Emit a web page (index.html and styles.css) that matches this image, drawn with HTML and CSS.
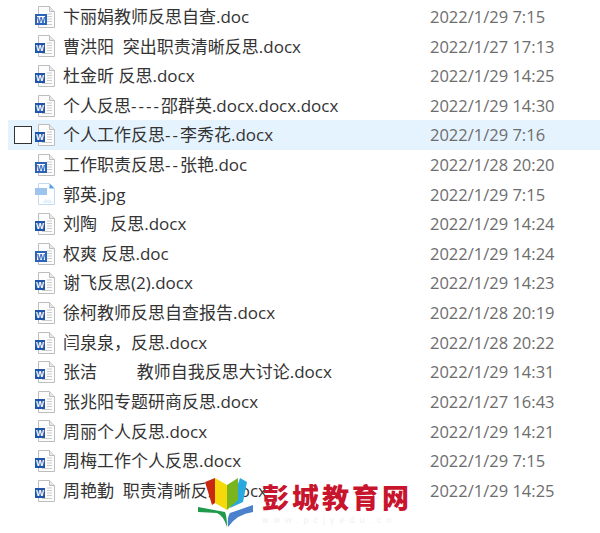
FILE: index.html
```html
<!DOCTYPE html>
<html lang="zh-CN">
<head>
  <meta charset="UTF-8" />
  <title>反思文件</title>
  <link rel="stylesheet" href="styles.css">
</head>
<body>
  <svg class="defs" width="0" height="0">
    <symbol id="page" viewBox="0 0 20 22">
      <path d="M3.5 .5H14.5L19.5 5.5V21.5H3.5Z" fill="#fdfdfd" stroke="#bdbdbd"/>
      <path d="M14.5 .5V5.5H19.5" fill="#e8e8e8" stroke="#bdbdbd"/>
      <path d="M12 8H17M12 10.5H17M12 13H17M12 15.5H17M7 18.5H17" stroke="#cbcbcb"/>
    </symbol>
    <symbol id="jpg" viewBox="0 0 20 22">
      <path d="M3.5 .5H14.5L19.5 5.5V21.5H3.5Z" fill="#fff" stroke="#c3daf2"/>
      <path d="M14.5 .5L19.5 5.5H14.5Z" fill="#5a9fe4"/>
      <rect x="0" y="5" width="12" height="7" fill="#9cc4ee"/>
      <path d="M7 20L11 16L13 17.5L15 16L18 20Z" fill="#e6f0fb"/>
    </symbol>
  </svg>

  <ul class="file-list">
    <li class="file"><span class="check"></span><svg class="icon" viewBox="0 0 20 22"><use href="#page"/><rect class="w-box-old" x="1" y="9" width="10" height="9"/><text x="6" y="16.5" class="icon-w blue">W</text></svg><span class="name">卞丽娟教师反思自查.doc</span><span class="date">2022/1/29 7:15</span></li>
    <li class="file"><span class="check"></span><svg class="icon" viewBox="0 0 20 22"><use href="#page"/><rect class="w-box" x="0" y="8" width="10" height="10"/><text x="5" y="16" class="icon-w">W</text></svg><span class="name">曹洪阳&nbsp;&nbsp;突出职责清晰反思.docx</span><span class="date">2022/1/27 17:13</span></li>
    <li class="file"><span class="check"></span><svg class="icon" viewBox="0 0 20 22"><use href="#page"/><rect class="w-box" x="0" y="8" width="10" height="10"/><text x="5" y="16" class="icon-w">W</text></svg><span class="name">杜金昕 反思.docx</span><span class="date">2022/1/29 14:25</span></li>
    <li class="file"><span class="check"></span><svg class="icon" viewBox="0 0 20 22"><use href="#page"/><rect class="w-box" x="0" y="8" width="10" height="10"/><text x="5" y="16" class="icon-w">W</text></svg><span class="name">个人反思<span class="dash">----</span>邵群英.docx.docx.docx</span><span class="date">2022/1/29 14:30</span></li>
    <li class="file selected"><span class="check on"></span><svg class="icon" viewBox="0 0 20 22"><use href="#page"/><rect class="w-box" x="0" y="8" width="10" height="10"/><text x="5" y="16" class="icon-w">W</text></svg><span class="name">个人工作反思<span class="dash">--</span>李秀花.docx</span><span class="date">2022/1/29 7:16</span></li>
    <li class="file"><span class="check"></span><svg class="icon" viewBox="0 0 20 22"><use href="#page"/><rect class="w-box-old" x="1" y="9" width="10" height="9"/><text x="6" y="16.5" class="icon-w blue">W</text></svg><span class="name">工作职责反思<span class="dash">--</span>张艳.doc</span><span class="date">2022/1/28 20:20</span></li>
    <li class="file"><span class="check"></span><svg class="icon" viewBox="0 0 20 22"><use href="#jpg"/></svg><span class="name">郭英.jpg</span><span class="date">2022/1/29 7:15</span></li>
    <li class="file"><span class="check"></span><svg class="icon" viewBox="0 0 20 22"><use href="#page"/><rect class="w-box" x="0" y="8" width="10" height="10"/><text x="5" y="16" class="icon-w">W</text></svg><span class="name">刘陶&nbsp;&nbsp;&nbsp;反思.docx</span><span class="date">2022/1/29 14:24</span></li>
    <li class="file"><span class="check"></span><svg class="icon" viewBox="0 0 20 22"><use href="#page"/><rect class="w-box-old" x="1" y="9" width="10" height="9"/><text x="6" y="16.5" class="icon-w blue">W</text></svg><span class="name">权爽 反思.doc</span><span class="date">2022/1/29 14:24</span></li>
    <li class="file"><span class="check"></span><svg class="icon" viewBox="0 0 20 22"><use href="#page"/><rect class="w-box" x="0" y="8" width="10" height="10"/><text x="5" y="16" class="icon-w">W</text></svg><span class="name">谢飞反思(2).docx</span><span class="date">2022/1/29 14:23</span></li>
    <li class="file"><span class="check"></span><svg class="icon" viewBox="0 0 20 22"><use href="#page"/><rect class="w-box" x="0" y="8" width="10" height="10"/><text x="5" y="16" class="icon-w">W</text></svg><span class="name">徐柯教师反思自查报告.docx</span><span class="date">2022/1/28 20:19</span></li>
    <li class="file"><span class="check"></span><svg class="icon" viewBox="0 0 20 22"><use href="#page"/><rect class="w-box" x="0" y="8" width="10" height="10"/><text x="5" y="16" class="icon-w">W</text></svg><span class="name">闫泉泉，反思.docx</span><span class="date">2022/1/28 20:22</span></li>
    <li class="file"><span class="check"></span><svg class="icon" viewBox="0 0 20 22"><use href="#page"/><rect class="w-box" x="0" y="8" width="10" height="10"/><text x="5" y="16" class="icon-w">W</text></svg><span class="name">张洁&nbsp;&nbsp;&nbsp;&nbsp;&nbsp;&nbsp;&nbsp;&nbsp;&nbsp;教师自我反思大讨论.docx</span><span class="date">2022/1/29 14:31</span></li>
    <li class="file"><span class="check"></span><svg class="icon" viewBox="0 0 20 22"><use href="#page"/><rect class="w-box" x="0" y="8" width="10" height="10"/><text x="5" y="16" class="icon-w">W</text></svg><span class="name">张兆阳专题研商反思.docx</span><span class="date">2022/1/27 16:43</span></li>
    <li class="file"><span class="check"></span><svg class="icon" viewBox="0 0 20 22"><use href="#page"/><rect class="w-box" x="0" y="8" width="10" height="10"/><text x="5" y="16" class="icon-w">W</text></svg><span class="name">周丽个人反思.docx</span><span class="date">2022/1/29 14:21</span></li>
    <li class="file"><span class="check"></span><svg class="icon" viewBox="0 0 20 22"><use href="#page"/><rect class="w-box" x="0" y="8" width="10" height="10"/><text x="5" y="16" class="icon-w">W</text></svg><span class="name">周梅工作个人反思.docx</span><span class="date">2022/1/29 7:15</span></li>
    <li class="file"><span class="check"></span><svg class="icon" viewBox="0 0 20 22"><use href="#page"/><rect class="w-box" x="0" y="8" width="10" height="10"/><text x="5" y="16" class="icon-w">W</text></svg><span class="name">周艳勤&nbsp;&nbsp;职责清晰反思.docx</span><span class="date">2022/1/29 14:25</span></li>
  </ul>

  <!-- watermark -->
  <div class="logo">
    <svg class="logo-book" viewBox="0 0 58 52">
      <path d="M43 1L50 5L46 25L33 31Z" fill="#29a9e0"/>
      <path d="M8 5L18 1V26L15 28Z" fill="#c8280f"/>
      <path d="M18 1L30 8V33L18 26Z" fill="#f5d90a"/>
      <path d="M30 8L41 1V23L30 33Z" fill="#7ab51d"/>
      <path d="M1 30L28 35Q30 40 30 50Q26 38 20 36L1 35Z" fill="#1f9a4c"/>
      <path d="M56 28V35Q40 37 31 50Q30 40 33 36Z" fill="#4a80cc"/>
    </svg>
    <div class="logo-text">
      <span class="logo-name">彭城教育网</span>
      <span class="logo-url">www.pcjyedu.cn</span>
    </div>
  </div>
</body>
</html>
```
FILE: styles.css
```css
html, body {
  margin: 0;
  padding: 0;
}
body {
  position: relative;
  width: 600px;
  height: 533px;
  overflow: hidden;
  background: #fff;
  font-family: "Open Sans", "Noto Sans CJK SC", sans-serif;
  font-size: 16.5px;
  color: #333;
}
.defs {
  position: absolute;
}
.w-box {
  fill: #1f54a8;
}
.w-box-old {
  fill: #fff;
  stroke: #2a63b8;
  stroke-width: 2;
}
.icon-w {
  font-family: "Liberation Sans", sans-serif;
  font-size: 8.5px;
  font-weight: 700;
  fill: #fff;
  text-anchor: middle;
}
.icon-w.blue {
  fill: #2a63b8;
}
.file-list {
  list-style: none;
  margin: 0;
  padding: 2px 0 0 8px;
}
.file {
  display: flex;
  align-items: center;
  height: 29.62px;
  line-height: 29.62px;
  white-space: nowrap;
}
.file.selected {
  background: #e5f3ff;
}
.check {
  flex: none;
  width: 18px;
  height: 18px;
  margin-left: 6px;
  margin-right: 3px;
  box-sizing: border-box;
}
.check.on {
  border: 1.5px solid #333;
  background: #fff;
}
.icon {
  flex: none;
  width: 20px;
  height: 22px;
}
.name {
  flex: none;
  width: 367px;
  margin-left: 8px;
  font-size: 17px;
}
.dash {
  letter-spacing: 2px;
}
.date {
  color: #6d6d6d;
}
.logo {
  position: absolute;
  left: 197px;
  top: 477px;
  display: flex;
  align-items: flex-start;
}
.logo-book {
  flex: none;
  width: 58px;
  height: 52px;
}
.logo-text {
  display: flex;
  flex-direction: column;
  margin-left: 7px;
  margin-top: 5px;
}
.logo-name {
  font-family: "Noto Sans CJK SC", sans-serif;
  font-size: 27px;
  line-height: 30px;
  font-weight: 900;
  letter-spacing: 3px;
  color: #c8152d;
}
.logo-url {
  margin-top: 3px;
  font-family: "Liberation Sans", sans-serif;
  font-size: 9px;
  line-height: 11px;
  letter-spacing: 5px;
  color: #f1f1f1;
}
```
